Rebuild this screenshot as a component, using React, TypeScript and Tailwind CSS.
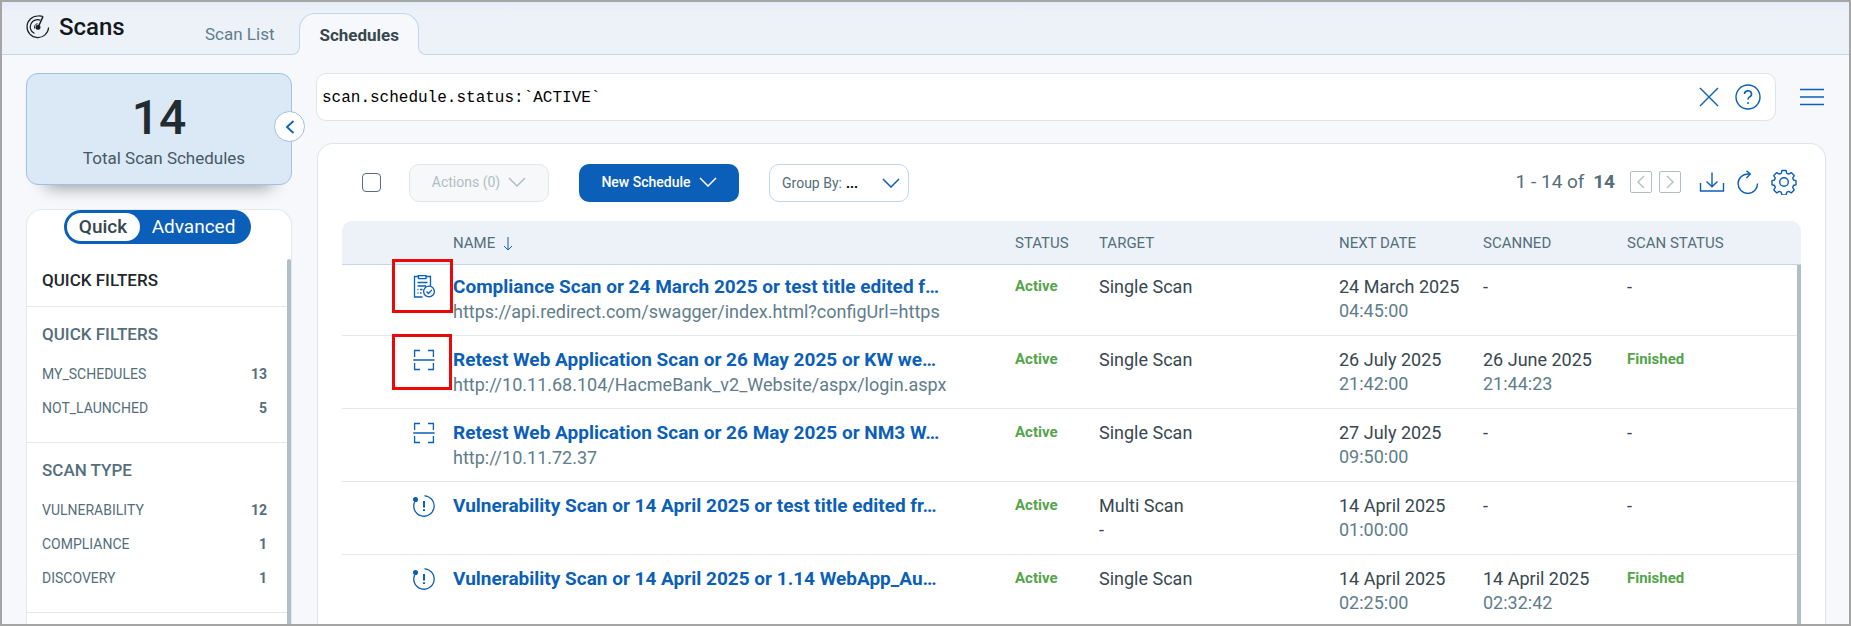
import { useState } from "react"
import clsx from "clsx"

type ScanIcon = "compliance" | "retest" | "vulnerability"

interface Schedule {
    icon: ScanIcon
    name: string
    url?: string
    target: string
    targetNote?: string
    nextDate: string
    nextTime: string
    scannedDate?: string
    scannedTime?: string
    scanStatus?: string
    marker?: string
}

const schedules: Schedule[] = [
    {
        icon: "compliance",
        name: "Compliance Scan or 24 March 2025 or test title edited f…",
        url: "https://api.redirect.com/swagger/index.html?configUrl=https",
        target: "Single Scan",
        nextDate: "24 March 2025",
        nextTime: "04:45:00",
        marker: "-top-1.5 h-[54px] w-[61px]",
    },
    {
        icon: "retest",
        name: "Retest Web Application Scan or 26 May 2025 or KW we…",
        url: "http://10.11.68.104/HacmeBank_v2_Website/aspx/login.aspx",
        target: "Single Scan",
        nextDate: "26 July 2025",
        nextTime: "21:42:00",
        scannedDate: "26 June 2025",
        scannedTime: "21:44:23",
        scanStatus: "Finished",
        marker: "-top-0.5 h-14 w-[60px]",
    },
    {
        icon: "retest",
        name: "Retest Web Application Scan or 26 May 2025 or NM3 W…",
        url: "http://10.11.72.37",
        target: "Single Scan",
        nextDate: "27 July 2025",
        nextTime: "09:50:00",
    },
    {
        icon: "vulnerability",
        name: "Vulnerability Scan or 14 April 2025 or test title edited fr…",
        target: "Multi Scan",
        targetNote: "-",
        nextDate: "14 April 2025",
        nextTime: "01:00:00",
    },
    {
        icon: "vulnerability",
        name: "Vulnerability Scan or 14 April 2025 or 1.14 WebApp_Au…",
        target: "Single Scan",
        nextDate: "14 April 2025",
        nextTime: "02:25:00",
        scannedDate: "14 April 2025",
        scannedTime: "02:32:42",
        scanStatus: "Finished",
    },
]

const filterGroups = [
    {
        title: "QUICK FILTERS",
        items: [
            { label: "MY_SCHEDULES", count: 13 },
            { label: "NOT_LAUNCHED", count: 5 },
        ],
    },
    {
        title: "SCAN TYPE",
        items: [
            { label: "VULNERABILITY", count: 12 },
            { label: "COMPLIANCE", count: 1 },
            { label: "DISCOVERY", count: 1 },
        ],
    },
]

function Chevron({ className }: { className?: string }) {
    return (
        <svg viewBox="0 0 18 10" className={clsx("h-2.5 w-[18px] shrink-0", className)} fill="none" stroke="currentColor" strokeWidth="1.5" aria-hidden="true">
            <path d="M1 1l8 8 8-8" />
        </svg>
    )
}

function RowIcon({ icon }: { icon: ScanIcon }) {
    return (
        <svg viewBox="0 0 24 24" className="mx-auto size-6" fill="none" stroke="currentColor" strokeWidth="1.3" aria-hidden="true">
            {icon === "compliance" && (
                <>
                    <path d="M10.5 22H2.5V1.5H6.5M14 1.5h4.5V11" />
                    <path d="M6.5 .7h7.5v3H6.5z" />
                    <path d="M5.5 7.5h10M5.5 11h8.5M5.5 14.5h1M8 14.5h2.5M5.5 18h1M8 18h1.5" />
                    <circle cx="17" cy="16.5" r="5.4" />
                    <path d="M14.5 16.5l2 2 3.3-3.6" />
                </>
            )}
            {icon === "retest" && <path d="M8 2.5H2.6V9M16 2.5h5.4V9M8 21.5H2.6V15M16 21.5h5.4V15M1.2 12h21.4" />}
            {icon === "vulnerability" && (
                <>
                    <path d="M2.8 7.5A10.2 10.2 0 1 0 12.5 1.8M12.5 1.8A10.2 10.2 0 0 1 19.5 5" />
                    <circle cx="3.5" cy="5.5" r="1.9" fill="currentColor" />
                    <path d="M12 7v6.5M12 15.2v1.8" strokeWidth="2" />
                </>
            )}
        </svg>
    )
}

function Header() {
    return (
        <header className="flex border-b border-[#bfd6ed] bg-linear-to-b from-[#e3ecf6] to-[#edf2f9] to-20% pl-6">
            <div className="flex w-[154px] items-center gap-[9px] pb-0.5">
                <svg viewBox="0 0 24 24" className="size-6 text-[#1b1f22]" fill="none" stroke="currentColor" strokeWidth="1.2" aria-hidden="true">
                    <path d="M17 1.5C15.500 1 13.500 .9 12 1A10.800 10.800 0 1 0 22.600 12.500" />
                    <path d="M14.500 5.300A7.200 7.200 0 0 0 8.500 18.500" />
                    <path d="M11.500 8.600A3.800 3.800 0 0 0 8.600 13.500" strokeWidth="1" />
                    <path d="M17 1.500L12.500 11.500" strokeWidth="1.500" />
                    <circle cx="12" cy="12.300" r="1.900" fill="currentColor" />
                </svg>
                <h1 className="text-2xl font-medium text-[#14181b]">Scans</h1>
            </div>
            <nav className="flex pt-[11px] text-[17px]">
                <a href="#scan-list" className="px-[25px] pt-[9px] text-[#607d8b]">
                    Scan List
                </a>
                <a
                    href="#schedules"
                    aria-current="page"
                    className="relative -mb-px h-[42px] rounded-t-2xl border border-b-0 border-[#bfd6ed] bg-[#f6f8fb] px-[19px] pt-[9px] font-bold text-[#37474f]"
                >
                    Schedules
                    <span className="absolute bottom-0 -left-2 size-2 bg-[#f6f8fb]">
                        <span className="block size-2 rounded-br-lg border-r border-b border-[#bfd6ed] bg-[#edf2f9]" />
                    </span>
                    <span className="absolute -right-2 bottom-0 size-2 bg-[#f6f8fb]">
                        <span className="block size-2 rounded-bl-lg border-b border-l border-[#bfd6ed] bg-[#edf2f9]" />
                    </span>
                </a>
            </nav>
        </header>
    )
}

function Sidebar() {
    const [mode, setMode] = useState("quick")

    return (
        <aside className="flex w-[266px] shrink-0 flex-col">
            <div className="relative mb-6 flex h-28 flex-col items-center justify-center rounded-xl border border-[#9fc1e4] bg-[#dbe8f5] shadow-[0_22px_16px_-20px_rgba(0,0,0,0.4)]">
                <span className="pt-2 text-5xl leading-12 font-medium text-[#222b30]">14</span>
                <span className="mt-1 pl-2.5 text-[17px] text-[#455a64]">Total Scan Schedules</span>
                <button
                    type="button"
                    aria-label="Collapse sidebar"
                    className="absolute top-[37px] -right-3.5 flex size-[31px] items-center justify-center rounded-full border border-[#9fc1e4] bg-white text-[#0b5fb8]"
                >
                    <svg viewBox="0 0 10 14" className="h-3.5 w-2.5" fill="none" stroke="currentColor" strokeWidth="1.8" aria-hidden="true">
                        <path d="M8.5 1L2 7l6.5 6" />
                    </svg>
                </button>
            </div>

            <div className="relative min-h-0 flex-1 overflow-hidden rounded-t-2xl border border-b-0 border-[#e3e8ea] bg-white pr-1">
                <div className="mx-auto flex h-[34px] w-[187px] items-center rounded-full bg-[#0b5fb8] p-[3px] text-[19px]">
                    <button
                        type="button"
                        onClick={() => setMode("quick")}
                        className={clsx("h-7 w-[73px] rounded-full leading-6 font-medium", mode === "quick" ? "bg-white text-[#37474f]" : "text-white")}
                    >
                        Quick
                    </button>
                    <button
                        type="button"
                        onClick={() => setMode("advanced")}
                        className={clsx("h-7 flex-1 rounded-full leading-6", mode === "advanced" ? "bg-white text-[#37474f]" : "text-white")}
                    >
                        Advanced
                    </button>
                </div>
                <h2 className="px-[15px] pt-6 pb-[14px] text-[17px] leading-6 font-medium text-[#1f282d]">QUICK FILTERS</h2>
                {filterGroups.map((group) => (
                    <section key={group.title} className="border-t border-[#e3e8ea] px-[15px] pt-[15px] pb-[17px]">
                        <h3 className="mb-[11px] text-[17px] leading-6 font-medium text-[#546e7a]">{group.title}</h3>
                        <ul>
                            {group.items.map((item) => (
                                <li key={item.label}>
                                    <button type="button" className="flex h-[34px] w-full items-center justify-between pr-[5px] text-sm text-[#546e7a]">
                                        <span>{item.label}</span>
                                        <span className="font-bold">{item.count}</span>
                                    </button>
                                </li>
                            ))}
                        </ul>
                    </section>
                ))}
                <div className="border-t border-[#e3e8ea]" />
                <div className="absolute top-[49px] right-0 bottom-0 w-1 rounded-t bg-[#b0bec5]" />
            </div>
        </aside>
    )
}

function SearchBar() {
    return (
        <div className="flex items-center pr-0.5">
            <div className="flex h-12 flex-1 items-center gap-4 rounded-[10px] border border-[#dfe4e9] bg-white pr-3.5 pl-[5px] text-[#0b5fb8]">
                <input
                    type="text"
                    aria-label="Search schedules"
                    defaultValue="scan.schedule.status:`ACTIVE`"
                    className="min-w-0 flex-1 pt-0.5 font-['Liberation_Mono',monospace] text-base text-black outline-none"
                />
                <button type="button" aria-label="Clear search">
                    <svg viewBox="0 0 20 20" className="size-5" fill="none" stroke="currentColor" strokeWidth="1.4" aria-hidden="true">
                        <path d="M1 1l18 18M19 1L1 19" />
                    </svg>
                </button>
                <button type="button" aria-label="Help">
                    <svg viewBox="0 0 26 26" className="size-[26px]" fill="none" stroke="currentColor" strokeWidth="1.4" aria-hidden="true">
                        <circle cx="13" cy="13" r="12" />
                        <path d="M9.5 10a3.5 3.2 0 1 1 5 2.9c-1 .6-1.5 1.1-1.5 2.6" strokeWidth="1.6" />
                        <circle cx="13" cy="19" r="1" fill="currentColor" stroke="none" />
                    </svg>
                </button>
            </div>
            <button type="button" aria-label="Menu" className="ml-6 text-[#0b5fb8]">
                <svg viewBox="0 0 24 18" className="h-[18px] w-6" fill="none" stroke="currentColor" strokeWidth="1.5" aria-hidden="true">
                    <path d="M0 1.5h24M0 9h24M0 16.5h24" />
                </svg>
            </button>
        </div>
    )
}

function Toolbar() {
    return (
        <div className="flex h-[38px] items-center pl-5">
            <input
                type="checkbox"
                aria-label="Select all schedules"
                className="mr-7 mb-0.5 size-[19px] appearance-none rounded border border-[#546e7a] bg-white checked:bg-[#0b5fb8]"
            />
            <button
                type="button"
                disabled
                className="mr-[30px] flex h-[38px] w-[140px] items-center justify-center gap-2 rounded-[10px] border border-[#e1e6ea] bg-[#f6f8f9] pb-0.5 text-sm text-[#b0bec5]"
            >
                Actions (0)
                <Chevron />
            </button>
            <button
                type="button"
                className="mr-[30px] flex h-[38px] w-40 items-center justify-center gap-2 rounded-[10px] bg-[#0b5fb8] pb-0.5 text-sm font-medium text-white"
            >
                New Schedule
                <Chevron />
            </button>
            <div className="relative flex h-[38px] w-[140px] items-center rounded-[10px] border border-[#bfd6ed] pl-3 text-sm text-[#546e7a]">
                <label htmlFor="group-by">Group By:</label>
                <select id="group-by" className="min-w-0 flex-1 appearance-none self-stretch pl-1 font-bold text-black outline-none">
                    <option>...</option>
                    <option>Status</option>
                    <option>Target</option>
                </select>
                <Chevron className="pointer-events-none absolute right-2 text-[#0b5fb8]" />
            </div>

            <div className="ml-auto flex items-center pr-1 pb-0.5 text-[#0b5fb8]">
                <span className="mr-[15px] text-[19px] text-[#546e7a]">
                    1 - 14 of <b className="ml-1">14</b>
                </span>
                <button type="button" aria-label="Previous page" className="mr-[7px] flex size-[22px] items-center justify-center rounded-xs border border-[#b0bec5] text-[#b0bec5]">
                    <svg viewBox="0 0 10 14" className="h-3.5 w-2.5" fill="none" stroke="currentColor" strokeWidth="1.4" aria-hidden="true">
                        <path d="M8 1L2 7l6 6" />
                    </svg>
                </button>
                <button type="button" aria-label="Next page" className="mr-[18px] flex size-[22px] items-center justify-center rounded-xs border border-[#b0bec5] text-[#b0bec5]">
                    <svg viewBox="0 0 10 14" className="h-3.5 w-2.5" fill="none" stroke="currentColor" strokeWidth="1.4" aria-hidden="true">
                        <path d="M2 1l6 6-6 6" />
                    </svg>
                </button>
                <button type="button" aria-label="Download" className="mr-[11px]">
                    <svg viewBox="0 0 26 24" className="h-6 w-[26px]" fill="none" stroke="currentColor" strokeWidth="1.4" aria-hidden="true">
                        <path d="M1.5 13v8h23V13" />
                        <path d="M13 2.5v14M7.5 11.5l5.5 5.2 5.5-5.2" />
                    </svg>
                </button>
                <button type="button" aria-label="Refresh" className="mr-[11px]">
                    <svg viewBox="0 0 24 24" className="size-6" fill="none" stroke="currentColor" strokeWidth="1.4" aria-hidden="true">
                        <path d="M21.5 13.5A9.7 9.7 0 1 1 12 4h2" />
                        <path d="M10.5 .8l3.8 3.3-3.8 3.9" />
                    </svg>
                </button>
                <button type="button" aria-label="Settings">
                    <svg viewBox="0 0 26 26" className="size-[26px]" fill="none" stroke="currentColor" strokeWidth="1.4" strokeLinejoin="round" aria-hidden="true">
                        <circle cx="13" cy="13" r="4.3" />
                        <path d="M10.9 1.5h4.200l.7 2.800 1.900.8 2.500-1.500 3 3-1.500 2.500.8 1.900 2.500.600v4.200l-2.600.700-.8 1.900 1.600 2.500-3 3-2.500-1.500-1.900.8-.7 2.800h-4.200l-.7-2.800-1.900-.8-2.500 1.500-3-3 1.600-2.500-.8-1.900-2.600-.700v-4.200l2.500-.600.8-1.900-1.500-2.500 3-3 2.500 1.500 1.900-.8z" />
                    </svg>
                </button>
            </div>
        </div>
    )
}

function ScheduleTable() {
    return (
        <div className="relative mt-[19px] min-h-0 flex-1">
            <table className="w-full table-fixed border-separate border-spacing-0 text-left text-[#37474f]">
                <colgroup>
                    <col className="w-[111px]" />
                    <col />
                    <col className="w-[84px]" />
                    <col className="w-60" />
                    <col className="w-36" />
                    <col className="w-36" />
                    <col className="w-[174px]" />
                </colgroup>
                <thead>
                    <tr className="h-11 text-[15px] text-[#546e7a] [&>th]:border-b [&>th]:border-[#bfd6ed] [&>th]:bg-[#edf2f9] [&>th]:pt-0.5 [&>th]:font-normal">
                        <th className="rounded-tl-[10px]" aria-label="Type" />
                        <th aria-sort="descending">
                            <button type="button" className="flex items-center gap-2">
                                NAME
                                <svg viewBox="0 0 10 14" className="h-3.5 w-2.5 text-[#0b5fb8]" fill="none" stroke="currentColor" aria-hidden="true">
                                    <path d="M5 0v13M1 9l4 4 4-4" />
                                </svg>
                            </button>
                        </th>
                        <th>STATUS</th>
                        <th>TARGET</th>
                        <th>NEXT DATE</th>
                        <th>SCANNED</th>
                        <th className="rounded-tr-[10px]">SCAN STATUS</th>
                    </tr>
                </thead>
                <tbody>
                    {schedules.map((row, i) => (
                        <tr
                            key={row.name}
                            className={clsx(
                                "align-top text-lg leading-6 [&>td]:border-b [&>td]:border-[#e3e8ea]",
                                i === 0 ? "h-[71px] [&>td]:pt-2.5" : "h-[73px] [&>td]:pt-3",
                            )}
                        >
                            <td className="relative pl-[52px] text-[#0b5fb8]">
                                <RowIcon icon={row.icon} />
                                {row.marker && <span className={clsx("absolute left-[50px] border-3 border-[#ea0808]", row.marker)} />}
                            </td>
                            <td className="whitespace-nowrap">
                                <a href="#schedule" className="block text-[19px] font-bold text-[#0b5fb8]">
                                    {row.name}
                                </a>
                                {row.url && <div className="pt-px text-[#607d8b]">{row.url}</div>}
                            </td>
                            <td className="text-[15px] leading-[22px] font-bold text-[#54a44a]">Active</td>
                            <td>
                                {row.target}
                                <div>{row.targetNote}</div>
                            </td>
                            <td>
                                {row.nextDate}
                                <div className="text-[#607d8b]">{row.nextTime}</div>
                            </td>
                            <td>
                                {row.scannedDate ?? "-"}
                                <div className="text-[#607d8b]">{row.scannedTime}</div>
                            </td>
                            <td>{row.scanStatus ? <div className="text-[15px] leading-[22px] font-bold text-[#54a44a]">{row.scanStatus}</div> : "-"}</td>
                        </tr>
                    ))}
                </tbody>
            </table>
            <div className="absolute top-11 right-0 bottom-0 w-1 bg-[#b0bec5]" />
        </div>
    )
}

export default function App() {
    return (
        <div className="flex h-screen flex-col overflow-hidden border-2 border-[#a5a5a5] bg-[#f6f8fb] font-[Roboto,sans-serif]">
            <Header />
            <div className="flex min-h-0 flex-1 gap-6 pt-[18px] pr-[23px] pl-6">
                <Sidebar />
                <main className="flex min-w-0 flex-1 flex-col">
                    <SearchBar />
                    <section className="mt-[22px] ml-px flex min-h-0 flex-1 flex-col rounded-t-2xl border border-b-0 border-[#dfe4e9] bg-white px-6 pt-5">
                        <Toolbar />
                        <ScheduleTable />
                    </section>
                </main>
            </div>
        </div>
    )
}
